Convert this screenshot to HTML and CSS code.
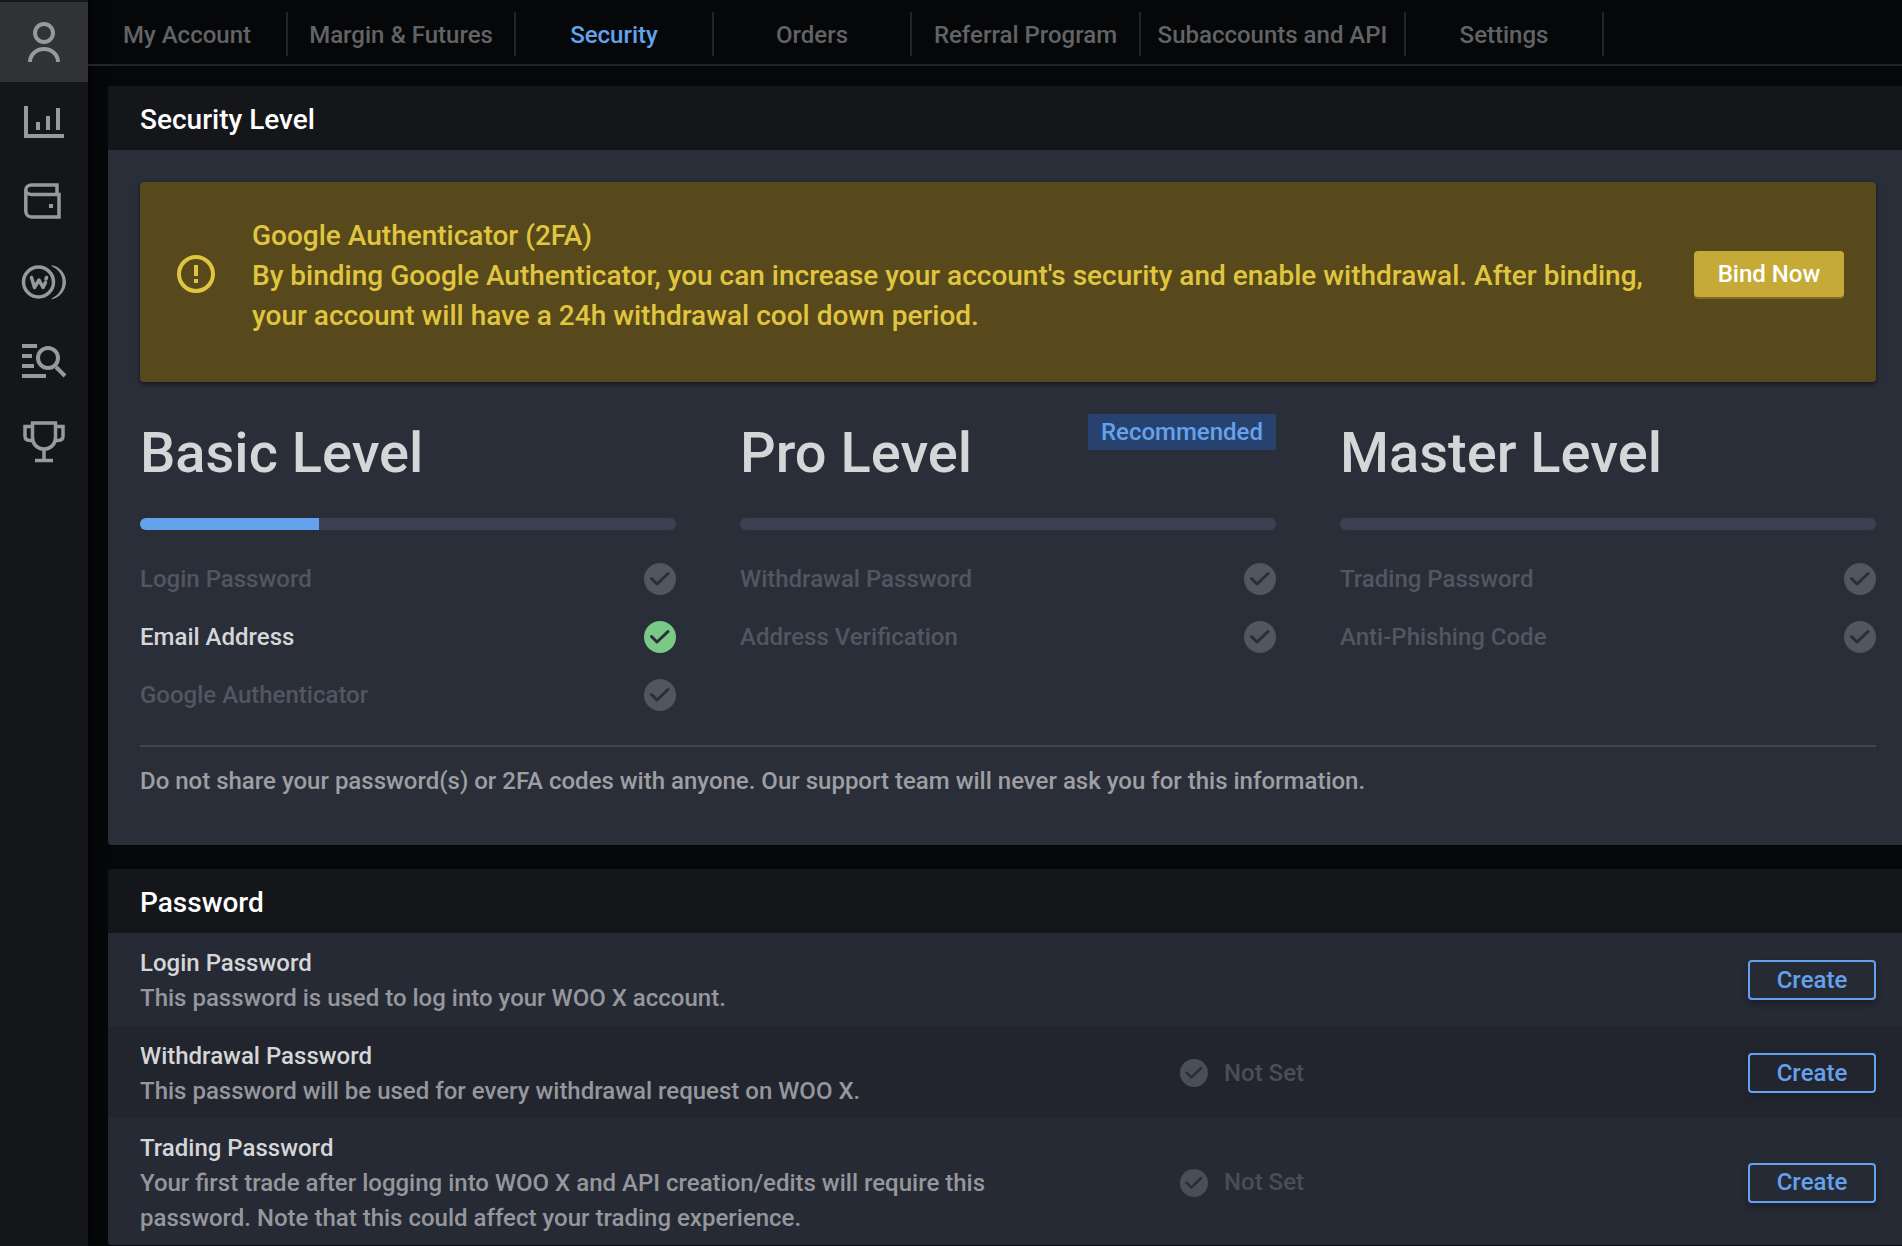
FILE: index.html
```html
<!DOCTYPE html>
<html lang="en">
<head>
<meta charset="utf-8">
<meta name="viewport" content="width=device-width, initial-scale=1">
<title>Security | WOO X</title>
<link rel="stylesheet" href="styles.css">
</head>
<body>
<svg class="defs" aria-hidden="true">
  <symbol id="check" viewBox="0 0 32 32">
    <circle cx="16" cy="16" r="16" fill="currentColor"/>
    <path class="tick" d="M7.500 15.500l5.500 5.500L24 10.500" fill="none" stroke-width="3" stroke-linecap="round" stroke-linejoin="round"/>
  </symbol>
</svg>
<div class="app">
  <aside class="sidebar">
    <a class="side-link active" href="#account" aria-label="Account">
      <svg viewBox="0 0 88 80"><circle cx="44" cy="31" r="9"/><path d="M30 60a14 13 0 0 1 28 0"/></svg>
    </a>
    <a class="side-link" href="#markets" aria-label="Markets">
      <svg viewBox="0 0 88 80"><path d="M26 24v30h38M38 40v8M48 34v14M58 26v22"/></svg>
    </a>
    <a class="side-link" href="#wallet" aria-label="Wallet">
      <svg class="medium" viewBox="0 0 88 80"><path d="M57 32V23H31.500c-3 0-5.700 2-5.700 4.700s2.700 4.800 5.700 4.800H59v22.500H31.500c-3.200 0-5.700-2.500-5.700-5.700V27.700"/><path class="solid" d="M49 42h4v4h-4z"/></svg>
    </a>
    <a class="side-link" href="#staking" aria-label="Staking">
      <svg class="thin" viewBox="0 0 88 80"><circle cx="38.500" cy="40" r="15"/><path class="join" d="M31.500 35.500l3 10 4.500-7.500 4 7.500 2.500-5M46 37l.5-1.500"/><path class="solid" d="M51 23c8 1 15 8 15 17s-7 16-15 17.500l2-2c5-2 9.500-8 9.500-15.500S58 27 53 25z"/></svg>
    </a>
    <a class="side-link" href="#history" aria-label="History">
      <svg viewBox="0 0 88 80"><path d="M22 24h15M22 34h10M22 44h12M22 54h24M56 45l9 9"/><circle cx="48" cy="36" r="10"/></svg>
    </a>
    <a class="side-link" href="#rewards" aria-label="Rewards">
      <svg class="medium" viewBox="0 0 88 80"><path d="M32.500 21h23v14.500c0 7-5 11.500-11.500 11.500s-11.500-4.500-11.500-11.500zM44 47v12M35 58.500h18M32 24.500h-7V34c0 3 2 4.500 5 4.500h3M56 24.500h7V34c0 3-2 4.500-5 4.500h-3"/></svg>
    </a>
  </aside>
  <div class="page">
    <nav class="tabs">
      <a class="tab" href="#my-account">My Account</a>
      <a class="tab" href="#margin">Margin &amp; Futures</a>
      <a class="tab current" href="#security" aria-current="page">Security</a>
      <a class="tab" href="#orders">Orders</a>
      <a class="tab" href="#referral">Referral Program</a>
      <a class="tab" href="#api">Subaccounts and API</a>
      <a class="tab" href="#settings">Settings</a>
    </nav>
    <main class="content">
      <section class="panel">
        <h2 class="panel-title">Security Level</h2>
        <div class="panel-body">
          <div class="banner">
            <svg class="alert" viewBox="0 0 38 38"><circle cx="19" cy="19" r="17"/><path d="M19 10v11M19 24v4"/></svg>
            <div class="banner-text">
              <p>Google Authenticator (2FA)</p>
              <p>By binding Google Authenticator, you can increase your account's security and enable withdrawal. After binding, your account will have a 24h withdrawal cool down period.</p>
            </div>
            <button class="bind" type="button">Bind Now</button>
          </div>
          <div class="levels">
            <div class="level">
              <div class="level-head"><h3>Basic Level</h3></div>
              <div class="bar"><div class="fill" style="width:33.333%"></div></div>
              <ul>
                <li>Login Password<svg class="mark"><use href="#check"/></svg></li>
                <li class="done">Email Address<svg class="mark"><use href="#check"/></svg></li>
                <li>Google Authenticator<svg class="mark"><use href="#check"/></svg></li>
              </ul>
            </div>
            <div class="level">
              <div class="level-head"><h3>Pro Level</h3><span class="badge">Recommended</span></div>
              <div class="bar"></div>
              <ul>
                <li>Withdrawal Password<svg class="mark"><use href="#check"/></svg></li>
                <li>Address Verification<svg class="mark"><use href="#check"/></svg></li>
              </ul>
            </div>
            <div class="level">
              <div class="level-head"><h3>Master Level</h3></div>
              <div class="bar"></div>
              <ul>
                <li>Trading Password<svg class="mark"><use href="#check"/></svg></li>
                <li>Anti-Phishing Code<svg class="mark"><use href="#check"/></svg></li>
              </ul>
            </div>
          </div>
          <p class="note">Do not share your password(s) or 2FA codes with anyone. Our support team will never ask you for this information.</p>
        </div>
      </section>
      <section class="panel">
        <h2 class="panel-title">Password</h2>
        <div class="row">
          <div class="info"><h3>Login Password</h3><p>This password is used to log into your WOO X account.</p></div>
          <div class="status"></div>
          <button class="create" type="button">Create</button>
        </div>
        <div class="row">
          <div class="info"><h3>Withdrawal Password</h3><p>This password will be used for every withdrawal request on WOO X.</p></div>
          <div class="status"><svg class="mark"><use href="#check"/></svg>Not Set</div>
          <button class="create" type="button">Create</button>
        </div>
        <div class="row">
          <div class="info"><h3>Trading Password</h3><p>Your first trade after logging into WOO X and API creation/edits will require this password. Note that this could affect your trading experience.</p></div>
          <div class="status"><svg class="mark"><use href="#check"/></svg>Not Set</div>
          <button class="create" type="button">Create</button>
        </div>
      </section>
    </main>
  </div>
</div>
</body>
</html>
```
FILE: styles.css
```css
* { box-sizing: border-box; margin: 0; padding: 0; }

body {
  background: #060709;
  color: #d5d6d8;
  font: 500 24px/35px Roboto, "Liberation Sans", sans-serif;
}

a { color: inherit; text-decoration: none; }
ul { list-style: none; }
h2, h3, button { font: inherit; }
button { cursor: pointer; }
.defs { display: none; }

.app { display: flex; min-height: 100vh; }

/* Sidebar */
.sidebar {
  flex: none;
  width: 88px;
  padding-top: 2px;
  background: #141619;
  box-shadow: 0 0 12px #000;
}
.side-link { display: block; height: 80px; color: #98999b; }
.side-link.active { background: #303235; }
.side-link svg {
  display: block;
  width: 88px;
  height: 80px;
  fill: none;
  stroke: currentColor;
  stroke-width: 4;
}
.side-link .thin { stroke-width: 3.5; }
.side-link .medium { stroke-width: 3.5; }
.side-link .join { stroke-linecap: round; stroke-linejoin: round; }
.side-link .solid { fill: currentColor; stroke: none; }

.page { flex: 1; min-width: 0; }

/* Top tabs */
.tabs {
  display: grid;
  grid-template-columns: 200px 228px 198px 198px 229px 265px 198px;
  padding: 12px 0 8px;
  border-bottom: 2px solid #222427;
}
.tab {
  height: 44px;
  border-right: 2px solid #222427;
  color: #626365;
  line-height: 46px;
  text-align: center;
  white-space: nowrap;
}
.tab.current { color: #64a2ee; }

.content {
  display: flex;
  flex-direction: column;
  gap: 24px;
  padding: 20px 0 0 20px;
}

/* Panels */
.panel { overflow: hidden; border-radius: 4px 0 0 4px; background: #2a2e39; }
.panel-title {
  padding: 4px 32px 0;
  background: #141619;
  color: #fff;
  font-size: 28px;
  line-height: 60px;
}
.panel-body { padding: 32px 26px 46px 32px; }

.banner {
  display: flex;
  align-items: center;
  padding: 30px 32px 46px 37px;
  border-radius: 4px;
  background: #57491b;
  box-shadow: 0 2px 4px #14161a;
  color: #e0c63f;
}
.alert { flex: none; width: 38px; height: 38px; fill: none; stroke: currentColor; stroke-width: 4; }
.banner-text { flex: 1; margin: 0 40px 0 37px; padding-top: 4px; font-size: 28px; line-height: 40px; }
.bind {
  flex: none;
  width: 150px;
  height: 46px;
  border: 0;
  border-radius: 4px;
  background: #c5aa38;
  box-shadow: 0 2px #7f6b27;
  color: #fff;
}

.levels {
  display: grid;
  grid-template-columns: repeat(3, 1fr);
  gap: 64px;
  padding: 32px 0 21px;
  border-bottom: 2px solid #44474f;
}
.level-head { display: flex; justify-content: space-between; align-items: flex-start; height: 104px; }
.level h3 { font-size: 56px; line-height: 78px; }
.badge {
  padding: 1px 13px 0;
  background: #284270;
  color: #64a2ee;
}
.bar { height: 12px; overflow: hidden; border-radius: 6px; background: #3d4053; }
.fill { height: 12px; background: #64a2ee; }
.level ul { padding-top: 20px; }
.level li {
  display: flex;
  align-items: center;
  justify-content: space-between;
  height: 58px;
  color: #525660;
}
.mark { flex: none; width: 32px; height: 32px; color: #525660; }
.tick { stroke: #2a2e39; }
.level .done { color: #d5d6d8; }
.done .mark { color: #7ac985; }
.note { padding-top: 17px; color: #9d9fa3; }

.row {
  display: grid;
  grid-template-columns: 900px 1fr 128px;
  align-items: center;
  column-gap: 140px;
  padding: 11px 26px 9px 32px;
  background: #262a34;
}
.panel-title + .row { padding-bottom: 10px; }
.row:nth-of-type(even) { background: #22252d; }
.info { padding-top: 2px; }
.info p { color: #95979c; }
.status { display: flex; align-items: center; gap: 16px; color: #4a4e56; }
.status .mark { width: 28px; height: 28px; color: #4a4e56; }
.create {
  height: 40px;
  border: 2px solid #64a2ee;
  border-radius: 4px;
  background: transparent;
  box-shadow: 0 4px 6px #1d1f29;
  color: #64a2ee;
}
```
